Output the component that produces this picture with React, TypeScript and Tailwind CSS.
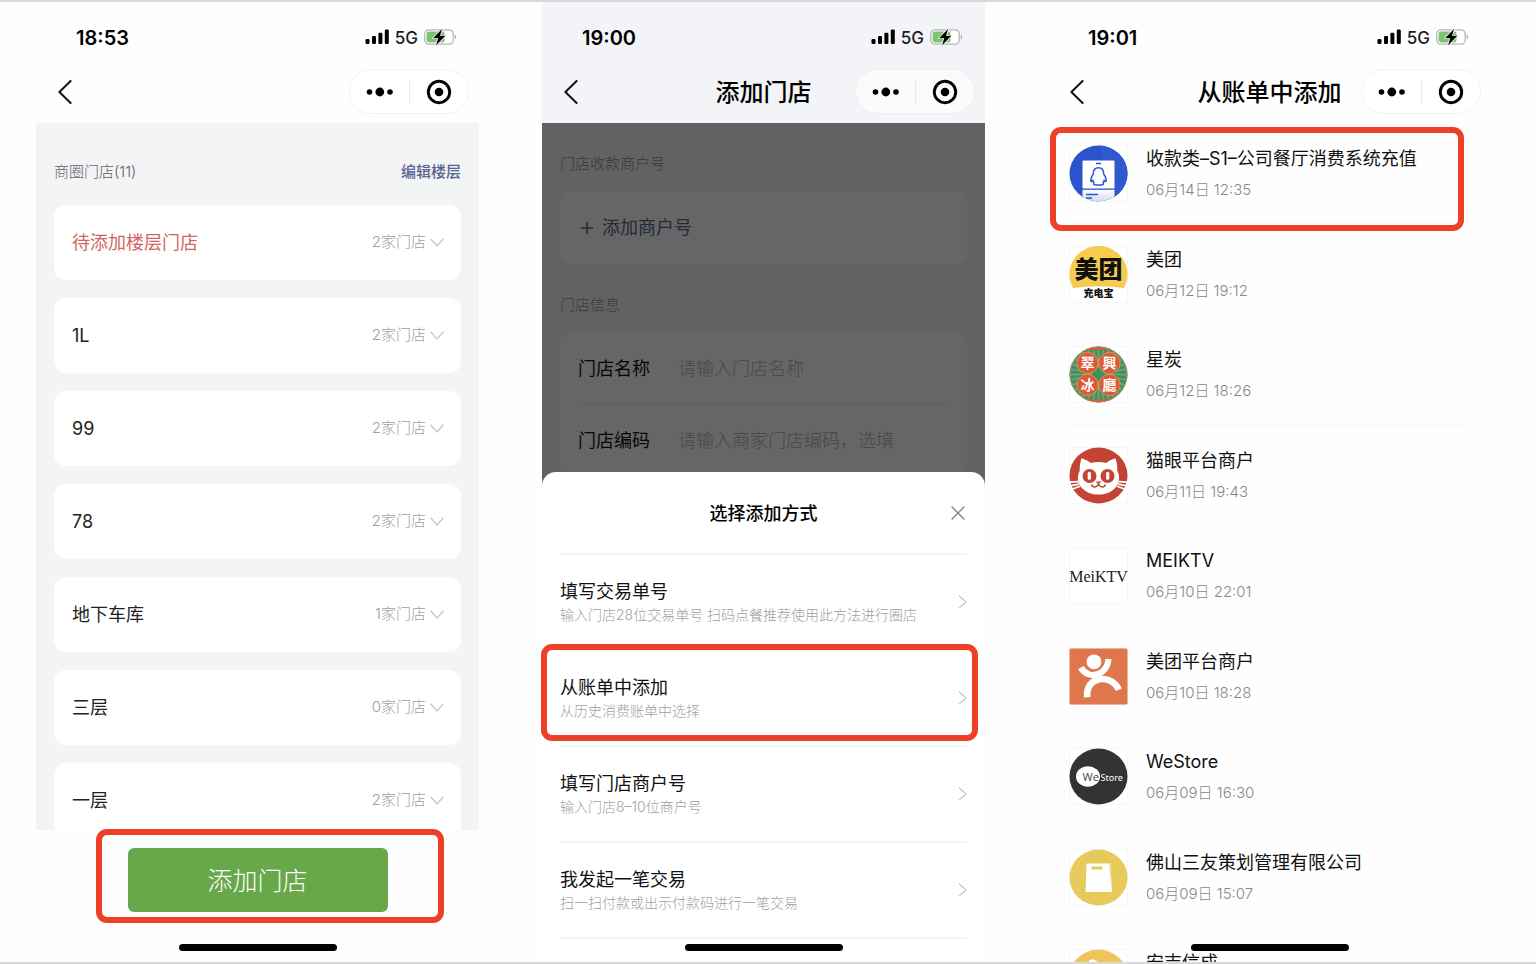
import type { ReactNode } from 'react';

function SignalIcon() {
  return (
    <svg width="24" height="16" viewBox="0 0 24 16" aria-hidden="true">
      <rect x="0.5" y="10" width="4" height="5" rx="1.2" />
      <rect x="7" y="7" width="4" height="8" rx="1.2" />
      <rect x="13.4" y="3.8" width="4" height="11.2" rx="1.2" />
      <rect x="19.8" y="0.6" width="4" height="14.4" rx="1.2" />
    </svg>
  );
}

function BatteryIcon() {
  return (
    <svg width="33" height="18" viewBox="0 0 33 18" aria-hidden="true">
      <rect x="0.8" y="1.8" width="28.4" height="14.4" rx="4.2" fill="#fff" stroke="#b4b6b8" strokeWidth="1.3" />
      <path d="M30.8 6.6c1.6.5 1.6 4.3 0 4.8z" fill="#a6a8aa" />
      <rect x="2.6" y="3.6" width="18" height="10.8" rx="2.4" fill="#7cc672" />
      <path
        d="M18.2.8 9 10.2h5.200L12 17.400 21.400 7.800h-5.400z"
        fill="#000"
        stroke="#fff"
        strokeWidth="1.6"
        strokeLinejoin="round"
        paintOrder="stroke"
      />
    </svg>
  );
}

function PhoneHeader({ time, title, tinted }: { time: string; title?: string; tinted?: boolean }) {
  return (
    <header className={tinted ? 'shrink-0 bg-[#f3f4f7] pt-5 pb-[9px]' : 'shrink-0 bg-[#fefefe] pt-5 pb-[9px]'}>
      <div className="flex h-[30px] items-center justify-between pr-[22px] pl-10">
        <span className="pt-0.5 text-xl leading-none font-semibold text-black">{time}</span>
        <div className="flex items-center gap-[6px]">
          <SignalIcon />
          <span className="pt-0.5 text-[17px] leading-none font-medium text-[#1c1c1e]">5G</span>
          <BatteryIcon />
        </div>
      </div>
      <div className="mt-[17px] grid h-[45px] grid-cols-[1fr_auto_1fr] items-center">
        <button type="button" aria-label="返回" className="ml-[21px] w-4">
          <svg width="16" height="24" viewBox="0 0 16 24" fill="none" stroke="#111" strokeWidth="2" aria-hidden="true">
            <path d="M13.6 1 2.4 12l11.2 11" strokeLinecap="round" strokeLinejoin="round" />
          </svg>
        </button>
        <h1 className="pt-[3px] text-2xl font-medium whitespace-nowrap text-black">{title}</h1>
        <div
          className={
            tinted
              ? 'mr-[10px] flex h-[45px] w-[120px] items-center justify-self-end rounded-full border border-[#eeeff1] bg-[#fbfbfc]'
              : 'mr-[10px] flex h-[45px] w-[120px] items-center justify-self-end rounded-full border border-[#f2f2f2] bg-white'
          }
        >
          <button type="button" aria-label="更多" className="flex flex-1 justify-center">
            <svg width="28" height="10" viewBox="0 0 28 10" aria-hidden="true">
              <circle cx="4.500" cy="5" r="2.8" />
              <circle cx="14.8" cy="5" r="4.4" />
              <circle cx="25" cy="5" r="2.8" />
            </svg>
          </button>
          <span className="h-[26px] w-px bg-[#e8e8e8]" />
          <button type="button" aria-label="关闭小程序" className="flex flex-1 justify-center">
            <svg width="26" height="26" viewBox="0 0 26 26" aria-hidden="true">
              <circle cx="13" cy="13" r="10.7" fill="none" stroke="#000" strokeWidth="2.9" />
              <circle cx="13" cy="13" r="4.3" />
            </svg>
          </button>
        </div>
      </div>
    </header>
  );
}

function HomeIndicator() {
  return <div className="mx-auto h-[7px] w-[158px] rounded-full bg-black" />;
}

const floors = [
  { name: '待添加楼层门店', count: 2, pending: true },
  { name: '1L', count: 2 },
  { name: '99', count: 2 },
  { name: '78', count: 2 },
  { name: '地下车库', count: 1 },
  { name: '三层', count: 0 },
  { name: '一层', count: 2 },
];

function FloorsPhone() {
  return (
    <section className="flex min-h-0 flex-col overflow-hidden">
      <PhoneHeader time="18:53" />
      <div className="min-h-0 flex-1 overflow-hidden bg-[#f3f4f6] px-[18px] pt-[38px]">
        <div className="mb-[22px] flex items-center justify-between text-[15px] leading-[22px]">
          <h2 className="font-light text-[#606264]">商圈门店(11)</h2>
          <a href="#floors" className="font-medium text-[#56628f]">
            编辑楼层
          </a>
        </div>
        <ul className="flex flex-col gap-[18px]">
          {floors.map((floor) => (
            <li key={floor.name}>
              <button
                type="button"
                className="flex h-[75px] w-full items-center justify-between rounded-xl bg-white pr-[17px] pl-[18px]"
              >
                <span className={floor.pending ? 'text-lg text-[#d0665d]' : 'text-lg text-[#222]'}>{floor.name}</span>
                <span className="flex items-center gap-1 text-[15px] font-light text-[#a0a0a0]">
                  {floor.count}家门店
                  <svg width="14" height="9" viewBox="0 0 14 9" fill="none" stroke="#c8c8c8" strokeWidth="1.3" aria-hidden="true">
                    <path d="M.6.8 7 8 13.4.8" />
                  </svg>
                </span>
              </button>
            </li>
          ))}
        </ul>
      </div>
      <footer className="shrink-0 bg-[#fefefe] pt-[18px] pb-[11px]">
        <div className="relative mx-auto mb-8 w-[260px]">
          <button type="button" className="h-16 w-full rounded-md bg-[#69a84a] pt-[3px] text-[25px] font-light text-white">
            添加门店
          </button>
          <div className="pointer-events-none absolute -top-[19px] -right-14 -bottom-[11px] -left-8 rounded-[11px] border-6 border-[#ec4126]" />
        </div>
        <HomeIndicator />
      </footer>
    </section>
  );
}

const methods = [
  { title: '填写交易单号', hint: '输入门店28位交易单号 扫码点餐推荐使用此方法进行圈店' },
  { title: '从账单中添加', hint: '从历史消费账单中选择', marked: true },
  { title: '填写门店商户号', hint: '输入门店8–10位商户号' },
  { title: '我发起一笔交易', hint: '扫一扫付款或出示付款码进行一笔交易' },
];

function AddStorePhone() {
  return (
    <section className="flex min-h-0 flex-col bg-white">
      <PhoneHeader time="19:00" title="添加门店" tinted />
      <div className="relative min-h-0 flex-1">
        <form className="h-full overflow-hidden bg-[#f3f4f7] px-[18px] pt-[30px] text-lg">
          <h2 className="mb-4 text-[15px] leading-[22px] font-light text-[#8f9193]">门店收款商户号</h2>
          <button
            type="button"
            className="mb-[30px] flex h-[73px] w-full items-center gap-2 rounded-xl bg-white pl-5 text-[#5a6795]"
          >
            <svg width="14" height="14" viewBox="0 0 14 14" stroke="#5a6795" strokeWidth="1.6" aria-hidden="true">
              <path d="M7 1v12M1 7h12" />
            </svg>
            添加商户号
          </button>
          <h2 className="mb-4 text-[15px] leading-[22px] font-light text-[#8f9193]">门店信息</h2>
          <div className="rounded-xl bg-white px-[18px]">
            <div className="flex h-[72px] items-center gap-7 border-b border-[#eaeaea] pt-0.5">
              <label htmlFor="store-name" className="text-[#111]">
                门店名称
              </label>
              <input
                id="store-name"
                placeholder="请输入门店名称"
                className="min-w-0 flex-1 font-light placeholder:text-[#b4b4b4]"
              />
            </div>
            <div className="flex h-[72px] items-center gap-7 pt-0.5">
              <label htmlFor="store-code" className="text-[#111]">
                门店编码
              </label>
              <input
                id="store-code"
                placeholder="请输入商家门店编码，选填"
                className="min-w-0 flex-1 font-light placeholder:text-[#b4b4b4]"
              />
            </div>
          </div>
        </form>
        <div className="absolute inset-0 bg-black/60" />
        <div role="dialog" aria-label="选择添加方式" className="absolute inset-x-0 bottom-0 rounded-t-[14px] bg-white px-[18px]">
          <div className="grid h-[83px] grid-cols-[1fr_auto_1fr] items-center border-b-2 border-[#f3f3f3]">
            <h2 className="col-start-2 pt-0.5 text-lg font-medium text-black">选择添加方式</h2>
            <button type="button" aria-label="关闭" className="justify-self-end pr-[2px]">
              <svg width="14" height="14" viewBox="0 0 14 14" stroke="#888" strokeWidth="1.4" aria-hidden="true">
                <path d="M.6.6l12.8 12.8M13.4.6.6 13.4" />
              </svg>
            </button>
          </div>
          <ul>
            {methods.map((method) => (
              <li key={method.title} className="relative border-b-2 border-[#f3f3f3]">
                <button type="button" className="flex h-[94px] w-full items-center justify-between text-left">
                  <span>
                    <span className="block text-lg leading-[25px] text-[#111]">{method.title}</span>
                    <span className="block text-sm leading-[22px] font-light text-[#a0a0a0]">{method.hint}</span>
                  </span>
                  <svg width="9" height="14" viewBox="0 0 9 14" fill="none" stroke="#c8c8c8" strokeWidth="1.4" aria-hidden="true">
                    <path d="M1 .8 8 7l-7 6.2" />
                  </svg>
                </button>
                {method.marked && (
                  <div className="pointer-events-none absolute -top-[7px] -right-[11px] bottom-1 -left-[19px] rounded-[11px] border-6 border-[#ec4126]" />
                )}
              </li>
            ))}
          </ul>
          <div className="pt-[5px] pb-[11px]">
            <HomeIndicator />
          </div>
        </div>
      </div>
    </section>
  );
}

function Logo({ children }: { children: ReactNode }) {
  return (
    <svg width="59" height="57" viewBox="0 0 59 57" className="shrink-0" aria-hidden="true">
      <rect x="0.5" y="0.5" width="58" height="56" rx="1.5" fill="#fff" stroke="#f5f6f7" />
      {children}
    </svg>
  );
}

function CanteenLogo() {
  return (
    <Logo>
      <defs>
        <clipPath id="canteen-clip">
          <ellipse cx="29.5" cy="28.5" rx="29" ry="28" />
        </clipPath>
        <linearGradient id="canteen-paper" x1="0" y1="0" x2="0" y2="1">
          <stop offset="0" stopColor="#fff" />
          <stop offset="1" stopColor="#c9d2ec" />
        </linearGradient>
      </defs>
      <g clipPath="url(#canteen-clip)">
        <path d="M0 0h59v57H0z" fill="#2b53cb" />
        <path d="M30 0h29v57H46z" fill="#3159ce" />
        <rect x="13.5" y="15.5" width="32" height="28" rx="1" fill="#fff" />
        <rect x="13.5" y="44.8" width="32" height="14" fill="url(#canteen-paper)" />
        <path d="M27 18.500h5M17 49.500h12M17 53h6" stroke="#2b53cb" strokeWidth="1.5" />
        <path
          d="M29.5 22.800c-4 0-5.200 3-5.200 6.200-1.600 2.400-2.800 5.200-2.400 7.400.7.300 1.400-.2 1.900-.9.200 1 .7 1.600 1.200 2.200-1.200.9-.5 2.300 1.500 2.300h6c2 0 2.700-1.400 1.500-2.300.5-.6 1-1.200 1.200-2.200.5.7 1.200 1.200 1.900.9.400-2.200-.8-5-2.400-7.400 0-3.200-1.200-6.200-5.200-6.200z"
          fill="none"
          stroke="#2b53cb"
          strokeWidth="1.4"
        />
      </g>
    </Logo>
  );
}

function MeituanPowerLogo() {
  return (
    <Logo>
      <path d="M4 42A29 28.500 0 1 1 55 42Q29.500 38.500 4 42z" fill="#f5cb52" />
      <text x="29.500" y="32" textAnchor="middle" fontSize="24" fontWeight="900" fill="#111">
        美团
      </text>
      <text x="29.500" y="51" textAnchor="middle" fontSize="10" fontWeight="900" fill="#111">
        充电宝
      </text>
    </Logo>
  );
}

const rays = Array.from({ length: 32 }, (_, i) => {
  const angle = (i * Math.PI) / 16;
  return { x: 29.5 + 29 * Math.cos(angle), y: 28.5 + 28 * Math.sin(angle) };
});

const discs = [
  { x: 18.5, y: 17, char: '翠' },
  { x: 40.5, y: 17, char: '興' },
  { x: 18.5, y: 39, char: '冰' },
  { x: 40.5, y: 39, char: '廳' },
];

function CafeLogo() {
  return (
    <Logo>
      <ellipse cx="29.5" cy="28.5" rx="29" ry="28" fill="#3f8f6b" />
      {rays.map((ray, i) => (
        <path key={i} d={`M29.5 28.5L${ray.x} ${ray.y}`} stroke="#78a862" strokeWidth="1.6" />
      ))}
      <path d="M14 5a29 28 0 0 1 31 0q-15.500-3-31 0zM14 52a29 28 0 0 0 31 0q-15.500 3-31 0z" fill="#d9573a" />
      <ellipse cx="29.5" cy="28.5" rx="28.4" ry="27.4" fill="none" stroke="#b08a55" strokeWidth="0.8" />
      <path d="M29.500 21l7 7.500-7 7.500-7-7.500z" fill="#3f8f5f" />
      {discs.map((disc) => (
        <g key={disc.char}>
          <circle cx={disc.x} cy={disc.y} r="10.6" fill="#dd5836" stroke="#d9a05a" strokeWidth="0.8" />
          <text
            x={disc.x}
            y={disc.y + 5}
            textAnchor="middle"
            fontSize="14"
            fontWeight="700"
            fill="#fff"
            className="font-['Noto_Sans_CJK_TC',sans-serif]"
          >
            {disc.char}
          </text>
        </g>
      ))}
    </Logo>
  );
}

function CatLogo() {
  return (
    <Logo>
      <ellipse cx="29.5" cy="28.5" rx="29" ry="28" fill="#c34434" />
      <path
        d="M12.500 11.200c3.600 1 6.800 2.800 9.200 4.800 5-1.300 10.600-1.300 15.600 0 2.400-2 5.600-3.800 9.200-4.800 1.400 4.200 1.900 8.600 1.800 12.600 2 3.200 2.400 8 1.200 11.600-2.500 7.200-10.400 12.100-20 12.100S12 42.600 9.500 35.400c-1.200-3.600-.8-8.400 1.200-11.600-.1-4 .4-8.400 1.800-12.600z"
        fill="#fff"
      />
      <path d="M0 35.200l9.500-.6M1 38.800l9-1.600M2.800 42.200l8.200-3M59 35.200l-9.500-.6M58 38.800l-9-1.600M56.200 42.200l-8.200-3" stroke="#fff" strokeWidth="1.700" />
      <circle cx="20.500" cy="29" r="7" fill="#c34434" />
      <circle cx="38.500" cy="29" r="7" fill="#c34434" />
      <rect x="18.700" y="24.800" width="3.200" height="8" rx="1.500" fill="#fff" />
      <rect x="37.100" y="24.800" width="3.200" height="8" rx="1.500" fill="#fff" />
      <path d="M26.500 34.500h6l-3 2.800z" fill="#c34434" />
      <path d="M22.500 37.500c1 3.200 5.800 3.400 7-.6 1.200 4 6 3.800 7 .6" fill="none" stroke="#c34434" strokeWidth="1.500" />
    </Logo>
  );
}

function KtvLogo() {
  return (
    <Logo>
      <text
        x="29.500"
        y="35"
        textAnchor="middle"
        fontSize="16"
        fill="#222"
        className="font-['Liberation_Serif',serif]"
      >
        MeiKTV
      </text>
    </Logo>
  );
}

function DianpingLogo() {
  return (
    <Logo>
      <rect x="0.500" y="0.500" width="58" height="56" rx="1.500" fill="#e0774c" />
      <circle cx="25" cy="13.800" r="7.400" fill="#fff" />
      <path d="M11.800 19.600c4 6.800 11.500 9.200 18.400 6 5.500-2.600 8.600-7.400 9.400-14.600" fill="none" stroke="#fff" strokeWidth="6.200" />
      <path d="M18.200 49.200c-.6-8.800 2.800-14.800 9.600-17.200 8.600-3 18.200 1 22 9.800" fill="none" stroke="#fff" strokeWidth="6.600" />
    </Logo>
  );
}

function WeStoreLogo() {
  return (
    <Logo>
      <ellipse cx="29.500" cy="28.500" rx="29" ry="28" fill="#333" />
      <ellipse cx="19" cy="28.500" rx="12" ry="10.300" fill="#fff" />
      <text x="13.500" y="33" fontSize="11" fill="#444" className="font-['Open_Sans',sans-serif]">
        We
      </text>
      <text x="31.500" y="33" fontSize="9" fill="#fff" className="font-['Noto_Sans',sans-serif]">
        Store
      </text>
    </Logo>
  );
}

function BagLogo() {
  return (
    <Logo>
      <ellipse cx="29.500" cy="28.500" rx="29" ry="28" fill="#e6ca5c" />
      <path d="M17.500 14.500h24L43 43H16.500z" fill="#fff" />
      <path d="M39.500 14.500h2L43 43z" fill="#f2e3a8" />
      <path d="M22.500 17.500h11v3h-11z" fill="#e6ca5c" />
    </Logo>
  );
}

function TagLogo() {
  return (
    <Logo>
      <ellipse cx="29.500" cy="28.500" rx="29" ry="28" fill="#efc459" />
      <path d="M20 11.500l4-1.500 14 8-8 28-12-10z" fill="#fff" />
    </Logo>
  );
}

const bills = [
  { name: '收款类–S1–公司餐厅消费系统充值', date: '06月14日 12:35', Icon: CanteenLogo, marked: true },
  { name: '美团', date: '06月12日 19:12', Icon: MeituanPowerLogo },
  { name: '星炭', date: '06月12日 18:26', Icon: CafeLogo },
  { name: '猫眼平台商户', date: '06月11日 19:43', Icon: CatLogo },
  { name: 'MEIKTV', date: '06月10日 22:01', Icon: KtvLogo },
  { name: '美团平台商户', date: '06月10日 18:28', Icon: DianpingLogo },
  { name: 'WeStore', date: '06月09日 16:30', Icon: WeStoreLogo },
  { name: '佛山三友策划管理有限公司', date: '06月09日 15:07', Icon: BagLogo },
  { name: '安吉信成', Icon: TagLogo },
];

function BillsPhone() {
  return (
    <section className="relative flex min-h-0 flex-col">
      <PhoneHeader time="19:01" title="从账单中添加" />
      <div className="min-h-0 flex-1 overflow-hidden pr-[23px] pl-[21px]">
        <ul>
          {bills.map(({ name, date, Icon, marked }) => (
            <li key={name} className="relative border-b border-[#f8f8f8] odd:h-[101px] even:h-[100px]">
              <button type="button" className="flex w-full items-start gap-[18px] pt-[22px] text-left">
                <Icon />
                <span>
                  <span className="block text-lg leading-7 whitespace-nowrap text-[#111]">{name}</span>
                  {date && <span className="mt-1.5 block text-[15px] leading-[22px] font-light text-[#888]">{date}</span>}
                </span>
              </button>
              {marked && (
                <div className="pointer-events-none absolute top-1 right-1 -bottom-2 -left-[19px] rounded-[11px] border-6 border-[#ec4126]" />
              )}
            </li>
          ))}
        </ul>
      </div>
      <div className="absolute inset-x-0 bottom-[11px]">
        <HomeIndicator />
      </div>
    </section>
  );
}

export default function App() {
  return (
    <main className="grid h-screen grid-cols-3 grid-rows-[minmax(0,1fr)] gap-[63px] border-y-2 border-[#d9d9d9] bg-[#fefefe] pr-[45px] pl-9 font-['Inter','Noto_Sans_CJK_SC',sans-serif]">
      <FloorsPhone />
      <AddStorePhone />
      <BillsPhone />
    </main>
  );
}
